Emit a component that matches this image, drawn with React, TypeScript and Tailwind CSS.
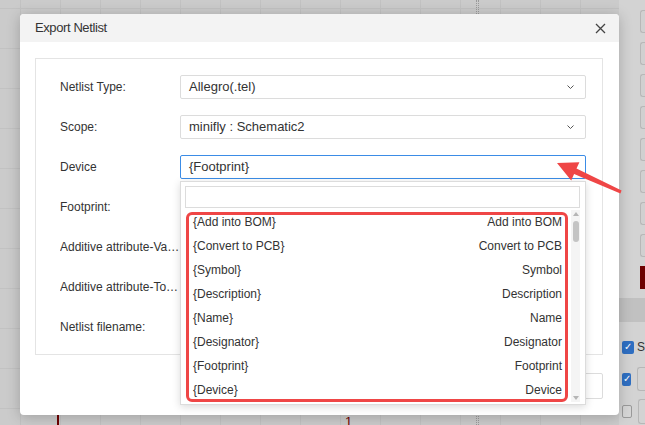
import React from 'react';

const items: [string, string][] = [
  ['{Add into BOM}', 'Add into BOM'],
  ['{Convert to PCB}', 'Convert to PCB'],
  ['{Symbol}', 'Symbol'],
  ['{Description}', 'Description'],
  ['{Name}', 'Name'],
  ['{Designator}', 'Designator'],
  ['{Footprint}', 'Footprint'],
  ['{Device}', 'Device'],
];

const Chevron = () => (
  <svg width="9" height="6" viewBox="0 0 9 6" className="shrink-0">
    <path d="M1.5 1.5l3 3 3-3" fill="none" stroke="#555" strokeWidth="1" />
  </svg>
);

const Select = ({ value, active }: { value?: string; active?: boolean }) => (
  <div
    className={`flex h-[24px] flex-1 items-center justify-between rounded-[2px] border bg-white pl-[8px] pr-[10px] text-[13px] text-[#333] ${
      active ? 'border-[#3b8ce6]' : 'border-[#dcdcdc]'
    }`}
  >
    <span>{value}</span>
    <Chevron />
  </div>
);

const Dropdown = () => (
  <div className="absolute left-0 top-[26px] z-10 flex h-[224px] w-full flex-col border border-[#dcdcdc] bg-white pl-[4px] pr-[5px] pt-[4px] shadow-[0_2px_8px_rgba(0,0,0,0.15)]">
    <div className="h-[22px] shrink-0 border border-[#dcdcdc]" />
    <div className="relative mt-[2px] flex h-[192px]">
      <div className="flex flex-1 flex-col pl-[8px] pr-[9px] text-[12px] text-[#333]">
        {items.map(([l, r]) => (
          <div key={l} className="flex h-[24px] shrink-0 items-center justify-between">
            <span>{l}</span>
            <span>{r}</span>
          </div>
        ))}
      </div>
      <div className="flex w-[9px] flex-col items-center bg-[#f4f4f4] py-[2px]">
        <div className="h-0 w-0 border-x-[3px] border-b-[4px] border-x-transparent border-b-[#b5b5b5]" />
        <div className="mt-[5px] h-[21px] w-[6px] rounded-[3px] bg-[#c4c4c4]" />
        <div className="flex-1" />
        <div className="h-0 w-0 border-x-[3px] border-t-[4px] border-x-transparent border-t-[#b5b5b5]" />
      </div>
      <div className="pointer-events-none absolute left-[1px] top-[2px] h-[190px] w-[382px] rounded-[6px] border-[3px] border-[#ef4646]" />
    </div>
  </div>
);

const Row = ({ label, children }: { label: string; children: React.ReactNode }) => (
  <div className="flex h-[24px] items-center">
    <div className="w-[120px] shrink-0 truncate text-[12px] text-[#333]">{label}</div>
    {children}
  </div>
);

const RightPanel = () => (
  <div className="flex w-[26px] shrink-0 flex-col bg-[#d3d3d3] pt-[10px]">
    {Array.from({ length: 8 }).map((_, i) => (
      <div key={i} className="mb-[9px] pl-[21px]">
        <div className="h-[23px] w-[20px] rounded-l-[3px] border border-r-0 border-[#b7b7b7] bg-[#d0d0d0]" />
      </div>
    ))}
    <div className="pl-[21px]">
      <div className="h-[23px] w-[20px] bg-[#6e0000]" />
    </div>
    <div className="mt-[9px] h-[24px] bg-[#c1c1c1]" />
    <div className="mt-[16px] flex items-center gap-[3px] pl-[3px]">
      <div className="flex h-[13px] w-[13px] items-center justify-center rounded-[2px] bg-[#2f6fc2] text-[10px] leading-none text-white">✓</div>
      <span className="text-[12px] text-[#333]">S</span>
    </div>
    <div className="mt-[11px] flex items-center gap-[6px] pl-[3px]">
      <div className="flex h-[13px] w-[13px] items-center justify-center rounded-[2px] bg-[#2f6fc2] text-[10px] leading-none text-white">✓</div>
      <div className="h-[24px] w-[10px] rounded-l-[3px] border border-r-0 border-[#b7b7b7]" />
    </div>
    <div className="mt-[8px] flex items-center gap-[6px] pl-[3px]">
      <div className="h-[13px] w-[13px] rounded-[2px] border border-[#9a9a9a] bg-[#d6d6d6]" />
      <div className="h-[25px] w-[10px] rounded-l-[3px] border border-r-0 border-[#b7b7b7]" />
    </div>
  </div>
);

export default function App() {
  return (
    <div
      className="relative flex h-[425px] w-[645px] overflow-hidden"
      style={{ fontFamily: '"Liberation Sans", Arial, sans-serif' }}
    >
      <div className="relative flex-1 bg-[#cbcbcb] bg-[linear-gradient(#c2c2c2_1px,transparent_1px),linear-gradient(90deg,#c2c2c2_1px,transparent_1px)] bg-[size:40px_40px] bg-[position:20px_8px]">
        <div className="absolute left-[476px] top-0 h-[16px] w-[3px] border-x border-dotted border-[#9a9a9a]" />
        <div className="absolute bottom-0 left-[476px] h-[12px] w-[3px] border-x border-dotted border-[#9a9a9a]" />
        <div className="absolute bottom-0 left-[57px] h-[12px] w-[2px] bg-[#6e0000]" />
        <div className="absolute left-[345px] top-[412px] text-[13px] text-[#6e0000]">1</div>
      </div>
      <RightPanel />

      <div className="absolute left-[20px] top-[14px] flex h-[401px] w-[599px] flex-col rounded-[4px] bg-white shadow-[0_2px_14px_rgba(0,0,0,0.22)]">
        <div className="flex h-[28px] shrink-0 items-center justify-between rounded-t-[4px] bg-[#f3f3f3] pl-[15px] pr-[13px]">
          <span className="text-[13px] tracking-[-0.4px] text-[#333]">Export Netlist</span>
          <svg width="11" height="11" viewBox="0 0 11 11">
            <path d="M1 1l9 9M10 1l-9 9" stroke="#444" strokeWidth="1.3" />
          </svg>
        </div>
        <div className="flex flex-1 flex-col pl-[15px] pr-[16px] pt-[16px]">
          <div className="flex h-[297px] flex-col gap-[16px] border border-[#e4e4e4] pl-[24px] pr-[16px] pt-[16px]">
            <Row label="Netlist Type:">
              <Select value="Allegro(.tel)" />
            </Row>
            <Row label="Scope:">
              <Select value="minifly : Schematic2" />
            </Row>
            <Row label="Device">
              <div className="relative flex flex-1">
                <Select value="{Footprint}" active />
                <Dropdown />
              </div>
            </Row>
            <Row label="Footprint:">
              <Select />
            </Row>
            <Row label="Additive attribute-Value">
              <Select />
            </Row>
            <Row label="Additive attribute-Tolerance">
              <Select />
            </Row>
            <Row label="Netlist filename:">
              <div className="h-[24px] flex-1 rounded-[2px] border border-[#dcdcdc]" />
            </Row>
          </div>
          <div className="mt-[18px] flex justify-end">
            <div className="flex h-[26px] w-[70px] items-center justify-center rounded-[2px] border border-[#dcdcdc] text-[12px] text-[#333]">
              Export
            </div>
          </div>
        </div>
      </div>

      <svg className="pointer-events-none absolute left-0 top-0" width="645" height="425">
        <polygon
          points="557,163 579.4,162.2 576.5,168.6 621.6,190.6 620.4,193.4 574.1,174 571.2,180.4"
          fill="#ef4646"
        />
      </svg>
    </div>
  );
}
